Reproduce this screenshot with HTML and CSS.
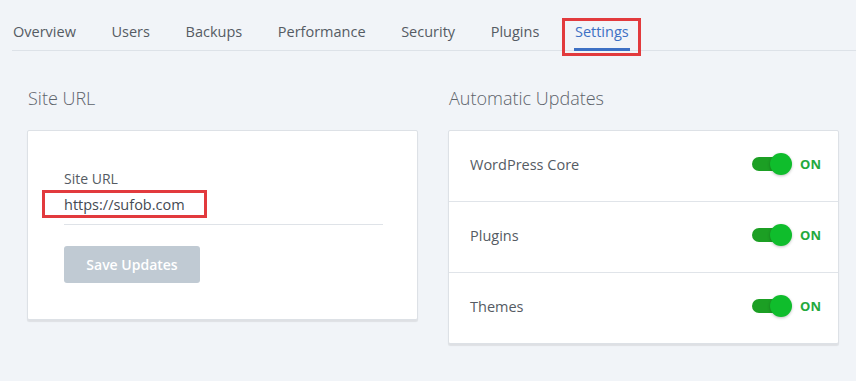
FILE: index.html
```html
<!DOCTYPE html>
<html>
<head>
<meta charset="utf-8">
<link rel="stylesheet" href="styles.css">
</head>
<body>
<nav class="tabs">
  <a class="tab">Overview</a>
  <a class="tab">Users</a>
  <a class="tab">Backups</a>
  <a class="tab">Performance</a>
  <a class="tab">Security</a>
  <a class="tab">Plugins</a>
  <a class="tab active marked">Settings</a>
</nav>
<main class="content">
  <section class="col">
    <h2 class="heading">Site URL</h2>
    <div class="card url-card">
      <label class="field-label">Site URL</label>
      <div class="field-input"><span class="field-value marked-url">https://sufob.com</span></div>
      <button class="btn">Save Updates</button>
    </div>
  </section>
  <section class="col">
    <h2 class="heading">Automatic Updates</h2>
    <div class="card list-card">
      <div class="row">
        <span class="row-label">WordPress Core</span>
        <span class="switch-wrap"><span class="switch"><span class="knob"></span></span><span class="on">ON</span></span>
      </div>
      <div class="row">
        <span class="row-label">Plugins</span>
        <span class="switch-wrap"><span class="switch"><span class="knob"></span></span><span class="on">ON</span></span>
      </div>
      <div class="row">
        <span class="row-label">Themes</span>
        <span class="switch-wrap"><span class="switch"><span class="knob"></span></span><span class="on">ON</span></span>
      </div>
    </div>
  </section>
</main>
</body>
</html>
```

FILE: styles.css
```css
* { box-sizing: border-box; }
html, body { margin: 0; padding: 0; }
body {
  background: #f1f4f8;
  font-family: "Open Sans", "Noto Sans", sans-serif;
  color: #555b63;
  width: 856px;
  height: 381px;
  overflow: hidden;
}
.tabs {
  display: flex;
  gap: 35.6px;
  margin-left: 12px;
  padding-left: 1px;
  border-bottom: 1px solid #dde2e8;
  height: 51px;
  align-items: flex-end;
}
.tab {
  display: block;
  font-size: 14.5px;
  line-height: 20px;
  padding-bottom: 6px;
  margin-bottom: -1px;
  color: #555b63;
  border-bottom: 3px solid transparent;
}
.tab.active {
  color: #3d70c4;
  border-bottom-color: #3d70c4;
  padding: 0 1px 6px;
  margin-left: -1px;
  margin-right: -1px;
}
.marked { position: relative; }
.marked::after {
  content: "";
  position: absolute;
  left: -12px;
  right: -11px;
  top: -4px;
  bottom: -8px;
  border: 3px solid #e23a3d;
}
.content {
  display: grid;
  grid-template-columns: 391px 391px;
  gap: 30px;
  padding: 0 0 0 27px;
}
.heading {
  margin: 35px 0 20px 1px;
  font-size: 18px;
  line-height: 24px;
  font-weight: 300;
  color: #5d636b;
}
.card {
  background: #fff;
  border: 1px solid #dde1e6;
  border-radius: 2px;
  box-shadow: 0 2px 1px rgba(0,0,0,0.08);
}
.url-card {
  padding: 37px 34px 36px 36px;
  display: flex;
  flex-direction: column;
  align-items: flex-start;
}
.field-label {
  font-size: 14px;
  line-height: 20px;
  color: #555b63;
  margin-top: 1px;
}
.field-input {
  width: 319px;
  border-bottom: 1px solid #dfe3e8;
  padding: 4px 0 8px;
}
.field-value {
  font-size: 14.5px;
  line-height: 22px;
  color: #444a52;
  display: inline-block;
}
.marked-url { position: relative; }
.marked-url::after {
  content: "";
  position: absolute;
  left: -22px;
  right: -22px;
  top: -4px;
  bottom: -2px;
  border: 3px solid #e23a3d;
}
.btn {
  margin-top: 21px;
  width: 136px;
  height: 37px;
  border: none;
  border-radius: 3px;
  background: #c0cad3;
  color: #fff;
  font-family: "Open Sans", "Noto Sans", sans-serif;
  font-size: 14px;
  font-weight: 600;
}
.list-card { display: flex; flex-direction: column; }
.row {
  height: 71px;
  display: flex;
  align-items: center;
  justify-content: space-between;
  padding: 0 17px 4px 21px;
  border-bottom: 1px solid #e0e4e9;
}
.row:last-child { border-bottom: none; height: 70px; }
.row-label {
  font-size: 14.5px;
  color: #555b63;
}
.switch-wrap { display: flex; align-items: center; gap: 9px; }
.switch {
  width: 39px;
  height: 14px;
  border-radius: 7px;
  background: #1c9f24;
  position: relative;
}
.knob {
  position: absolute;
  right: -1px;
  top: -4px;
  width: 22px;
  height: 22px;
  border-radius: 50%;
  background: #0fbd2c;
  box-shadow: 0 1px 3px rgba(0,0,0,0.25);
}
.on {
  font-size: 13px;
  font-weight: 700;
  color: #23a93d;
}
```
